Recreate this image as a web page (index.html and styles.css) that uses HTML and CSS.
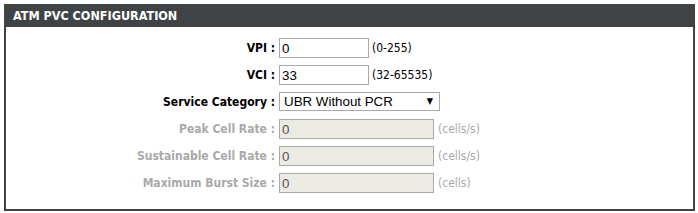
FILE: index.html
```html
<!DOCTYPE html>
<html lang="en">
<head>
    <meta charset="UTF-8">
    <title>ATM PVC Configuration</title>
    <link rel="stylesheet" href="styles.css">
</head>
<body>
    <div class="box">
        <h2 class="box-title">ATM PVC CONFIGURATION</h2>
        <div class="box-body">
            <div class="row">
                <label for="vpi">VPI :</label>
                <input type="text" id="vpi" class="short" value="0">
                <span class="hint">(0-255)</span>
            </div>
            <div class="row">
                <label for="vci">VCI :</label>
                <input type="text" id="vci" class="short" value="33">
                <span class="hint">(32-65535)</span>
            </div>
            <div class="row">
                <label for="category">Service Category :</label>
                <div class="select-wrap">
                    <select id="category">
                        <option>UBR Without PCR</option>
                        <option>UBR With PCR</option>
                        <option>CBR</option>
                        <option>Non Realtime VBR</option>
                        <option>Realtime VBR</option>
                    </select>
                </div>
            </div>
            <div class="row">
                <label for="pcr" class="off">Peak Cell Rate :</label>
                <input type="text" id="pcr" class="long" value="0" disabled>
                <span class="hint off">(cells/s)</span>
            </div>
            <div class="row">
                <label for="scr" class="off">Sustainable Cell Rate :</label>
                <input type="text" id="scr" class="long" value="0" disabled>
                <span class="hint off">(cells/s)</span>
            </div>
            <div class="row">
                <label for="mbs" class="off">Maximum Burst Size :</label>
                <input type="text" id="mbs" class="long" value="0" disabled>
                <span class="hint off">(cells)</span>
            </div>
        </div>
    </div>
</body>
</html>
```

FILE: styles.css
```css
body {
    margin: 0;
    padding: 4px 3px 2px 4px;
    background-color: #fff;
    font-family: "DejaVu Sans Condensed", "DejaVu Sans", sans-serif;
    font-size: 12px;
}
.box {
    width: 691px;
}
.box-title {
    margin: 0;
    height: 23px;
    line-height: 23px;
    padding-left: 9px;
    background-color: #3f4345;
    color: #fff;
    font-size: 12.5px;
    font-weight: bold;
}
.box-body {
    border: 2px solid #3f4345;
    border-top: none;
    padding: 11px 0 16px 0;
    display: flex;
    flex-direction: column;
    gap: 7px;
}
.row {
    display: flex;
    align-items: center;
    height: 20px;
}
label {
    width: 273px;
    box-sizing: border-box;
    text-align: right;
    padding-right: 4px;
    font-weight: bold;
    color: #000;
}
label.off {
    color: #a9a9a9;
}
input {
    box-sizing: border-box;
    height: 20px;
    margin: 0;
    padding: 0 2px;
    border: 1px solid #a9a9a9;
    font-family: "Liberation Sans", Arial, sans-serif;
    font-size: 13.33px;
    color: #000;
    background: #fff;
}
input.short {
    width: 90px;
}
input.long {
    width: 155px;
}
input:disabled {
    background-color: #ebebe4;
    color: #545454;
}
.hint {
    padding-left: 3px;
    color: #000;
}
.hint.off {
    padding-left: 4px;
    color: #a9a9a9;
}
.select-wrap {
    position: relative;
    width: 161px;
    height: 19px;
    align-self: flex-start;
}
.select-wrap::after {
    content: "\25BC";
    position: absolute;
    right: 7px;
    top: 4px;
    font-size: 9px;
    line-height: 10px;
    color: #000;
    pointer-events: none;
}
select {
    -webkit-appearance: none;
    appearance: none;
    box-sizing: border-box;
    width: 161px;
    height: 19px;
    margin: 0;
    padding: 0 4px;
    border: 1px solid #a9a9a9;
    border-radius: 0;
    background: #fff;
    font-family: "Liberation Sans", Arial, sans-serif;
    font-size: 13.33px;
    color: #000;
}
```
